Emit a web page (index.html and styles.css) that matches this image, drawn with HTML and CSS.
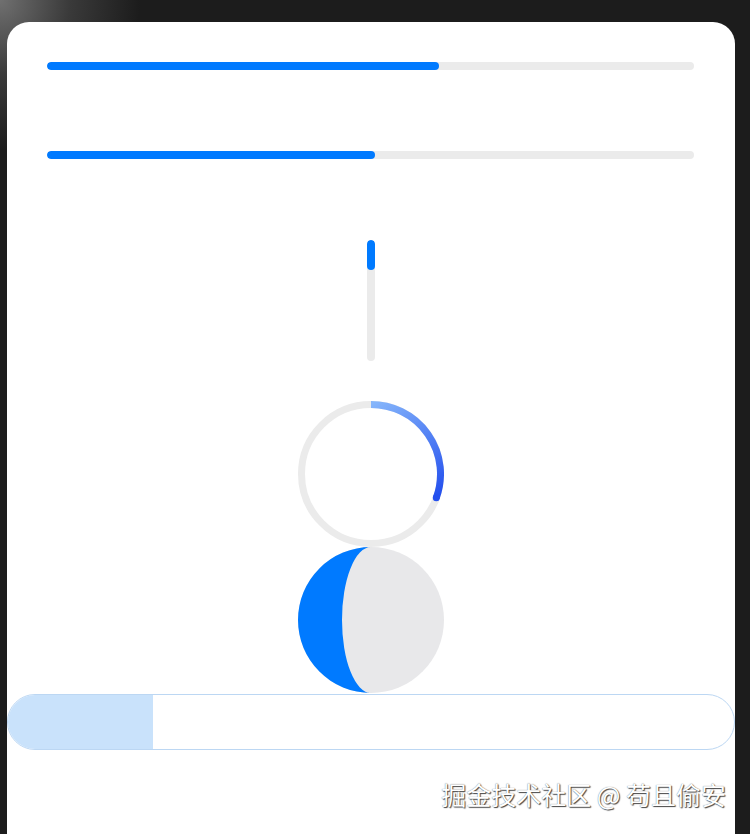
FILE: index.html
```html
<!DOCTYPE html>
<html>
<head>
<meta charset="utf-8">
<link rel="stylesheet" href="styles.css">
</head>
<body>
<div class="panel">
  <div class="hbars">
    <div class="track"><div class="fill" style="width:392px"></div></div>
    <div class="track"><div class="fill" style="width:328px"></div></div>
  </div>
  <div class="vtrack"><div class="vfill"></div></div>
  <svg class="ring" width="146" height="146" viewBox="0 0 146 146">
    <defs>
      <linearGradient id="rg" gradientUnits="userSpaceOnUse" x1="73" y1="3" x2="138" y2="97">
        <stop offset="0" stop-color="#86b6fb"/>
        <stop offset="1" stop-color="#2450ee"/>
      </linearGradient>
    </defs>
    <circle cx="73" cy="73" r="69.5" fill="none" stroke="#ebebeb" stroke-width="7"/>
    <path d="M73,3.5 A69.5,69.5 0 0 1 138.3,96.8" fill="none" stroke="url(#rg)" stroke-width="7"/>
    <circle cx="138.3" cy="96.8" r="3.5" fill="#2450ee"/>
  </svg>
  <svg class="moon" width="146" height="146" viewBox="0 0 146 146">
    <circle cx="73" cy="73" r="73" fill="#e8e8ea"/>
    <path d="M73,0 A73,73 0 0 0 73,146 A29,73 0 0 1 73,0 Z" fill="#007aff"/>
  </svg>
  <div class="wide"><div class="wide-fill"></div></div>
  <div class="mark">掘金技术社区 @ 苟且偷安</div>
</div>
</body>
</html>
```
FILE: styles.css
```css
html, body {
  margin: 0;
  padding: 0;
}
body {
  width: 750px;
  height: 834px;
  overflow: hidden;
  background: radial-gradient(ellipse 140px 150px at 0 0, #707070 0%, #3a3a3a 50%, #1c1c1c 100%), #1c1c1c;
  background-color: #1c1c1c;
}
.panel {
  margin: 22px 0 0 7px;
  width: 728px;
  height: 812px;
  background: #fff;
  border-radius: 22px 22px 0 0;
  display: flex;
  flex-direction: column;
  align-items: center;
}
.hbars {
  align-self: stretch;
  padding: 40px 41px 0 40px;
  display: flex;
  flex-direction: column;
  gap: 81px;
}
.track {
  height: 8px;
  border-radius: 4px;
  background: #ebebeb;
  overflow: hidden;
}
.fill {
  height: 100%;
  background: #007aff;
  border-radius: 4px;
}
.vtrack {
  margin-top: 81px;
  width: 8px;
  height: 121px;
  border-radius: 4px;
  background: #ebebeb;
  overflow: hidden;
}
.vfill {
  height: 30px;
  background: #007aff;
  border-radius: 4px;
}
.ring {
  margin-top: 40px;
  display: block;
}
.moon {
  display: block;
}
.wide {
  align-self: stretch;
  margin-top: 1px;
  height: 54px;
  border: 1px solid #bcd7f3;
  border-radius: 28px;
  overflow: hidden;
}
.wide-fill {
  width: 145px;
  height: 100%;
  background: #c9e2fb;
}
.mark {
  align-self: flex-end;
  margin: 27px 9px 0 0;
  font-family: "Noto Sans CJK SC", sans-serif;
  font-size: 25px;
  line-height: 34px;
  color: #fff;
  text-shadow: 1px 1px 1px #444, 0 0 1px #666;
  white-space: nowrap;
}
```
